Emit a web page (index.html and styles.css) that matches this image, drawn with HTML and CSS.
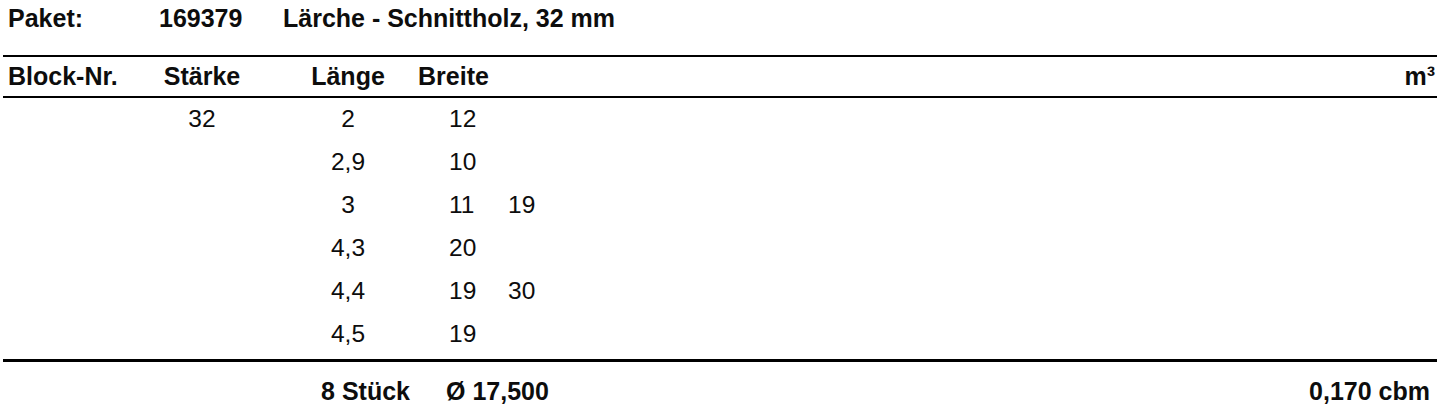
FILE: index.html
```html
<!DOCTYPE html>
<html lang="de">
<head>
<meta charset="utf-8">
<title>Paket 169379</title>
<link rel="stylesheet" href="styles.css">
</head>
<body>
<div class="sheet">
  <div class="title">
    <span class="t-label">Paket:</span>
    <span class="t-num">169379</span>
    <span class="t-desc">Lärche - Schnittholz, 32 mm</span>
  </div>
  <div class="grid head">
    <div class="c1">Block-Nr.</div>
    <div class="c2">Stärke</div>
    <div class="c3">Länge</div>
    <div class="c4 breite-head">Breite</div>
    <div class="c5">m³</div>
  </div>
  <div class="body">
    <div class="grid row"><div class="c1"></div><div class="c2">32</div><div class="c3">2</div><div class="c4 vals"><span class="v">12</span></div><div class="c5"></div></div>
    <div class="grid row"><div class="c1"></div><div class="c2"></div><div class="c3">2,9</div><div class="c4 vals"><span class="v">10</span></div><div class="c5"></div></div>
    <div class="grid row"><div class="c1"></div><div class="c2"></div><div class="c3">3</div><div class="c4 vals"><span class="v">11</span><span class="v">19</span></div><div class="c5"></div></div>
    <div class="grid row"><div class="c1"></div><div class="c2"></div><div class="c3">4,3</div><div class="c4 vals"><span class="v">20</span></div><div class="c5"></div></div>
    <div class="grid row"><div class="c1"></div><div class="c2"></div><div class="c3">4,4</div><div class="c4 vals"><span class="v">19</span><span class="v">30</span></div><div class="c5"></div></div>
    <div class="grid row"><div class="c1"></div><div class="c2"></div><div class="c3">4,5</div><div class="c4 vals"><span class="v">19</span></div><div class="c5"></div></div>
  </div>
  <div class="grid foot">
    <div class="c1"></div>
    <div class="c2"></div>
    <div class="c3 count">8 Stück</div>
    <div class="c4 avg">Ø 17,500</div>
    <div class="c5 total">0,170 cbm</div>
  </div>
</div>
</body>
</html>
```
FILE: styles.css
```css
html, body {
  margin: 0;
  padding: 0;
  background: #ffffff;
}

body {
  font-family: "Liberation Sans", Arial, sans-serif;
  font-size: 24.5px;
  color: #0d0d0d;
}

.sheet {
  margin: 0 8px 0 3px;
}

.title {
  display: flex;
  height: 55px;
  line-height: 36px;
  font-size: 25px;
  font-weight: bold;
  white-space: nowrap;
}

.t-label {
  width: 156px;
  padding-left: 5px;
  box-sizing: border-box;
  flex: none;
}

.t-num {
  width: 124px;
  flex: none;
}

.grid {
  display: grid;
  grid-template-columns: 115px 168px 124px 1fr auto;
  white-space: nowrap;
}

.c1 { padding-left: 5px; }
.c2 { text-align: center; }
.c3 { text-align: center; }
.c5 { text-align: right; padding-right: 2px; }

.head {
  border-top: 2px solid #000;
  border-bottom: 2px solid #000;
  height: 39px;
  line-height: 39px;
  font-size: 25px;
  font-weight: bold;
}

.breite-head {
  padding-left: 8px;
}

.row {
  height: 43px;
  line-height: 42px;
}

.vals {
  display: flex;
  padding-left: 39px;
}

.v {
  width: 59px;
  flex: none;
}

.foot {
  margin-top: 3px;
  border-top: 3px solid #000;
  height: 58px;
  line-height: 58px;
  font-size: 25px;
  font-weight: bold;
}

.count {
  text-align: right;
}

.avg {
  padding-left: 36px;
}

.total {
  padding-right: 7px;
}
```
